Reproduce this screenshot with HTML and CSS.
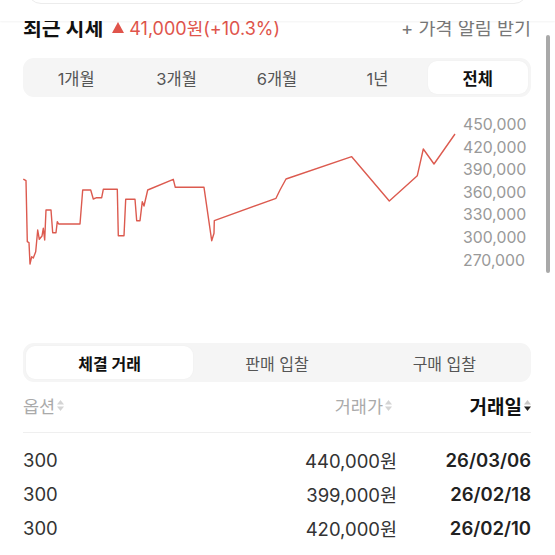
FILE: index.html
```html
<!DOCTYPE html>
<html lang="ko">
<head>
  <meta charset="UTF-8">
  <title>최근 시세</title>
  <link rel="stylesheet" href="styles.css">
</head>
<body>
  <div class="top-strip">
    <div class="prev-card"></div>
  </div>
  <div class="scroll-thumb"></div>

  <main class="page">
    <div class="price-head">
      <div class="price-title">
        <span class="title">최근 시세</span>
        <span class="change">
          <svg class="up" width="12" height="11" viewBox="0 0 12 11"><polygon points="6,0 12,11 0,11" fill="#e0544b"/></svg>
          41,000원(+10.3%)
        </span>
      </div>
      <div class="alert">+ 가격 알림 받기</div>
    </div>

    <div class="seg seg-5">
      <div class="seg-item">1개월</div>
      <div class="seg-item">3개월</div>
      <div class="seg-item">6개월</div>
      <div class="seg-item">1년</div>
      <div class="seg-item active">전체</div>
    </div>

    <div class="chart">
      <svg class="chart-line" width="440" height="170" viewBox="23 110 440 170">
        <polyline fill="none" stroke="#dc5a4f" stroke-width="1.4" stroke-linejoin="round"
          points="23.3,179 26,180.7 27.3,241.7 29,242.7 30,264 31.7,256.7 33.3,258 35.7,251.7 37.7,230 39.3,239.3 42,236 43.3,228.3 44.7,240 46,210 51,210 52.7,232.7 56,232.7 57.3,221.7 58.7,224 80,224 82.7,190 90.7,190 93.3,199 96.7,197.7 101.7,197.7 103.3,189.3 117.3,189.3 118.3,235.7 124,235.7 125.7,199.3 135,199.3 136.7,220.7 140,220.7 142.3,201.7 144,206 147.7,190 173.3,179.3 175.3,187.3 204,187.3 211.7,240.7 214,233.3 214.3,220.7 276,198.3 280,190 286,179 351.7,156.7 389.3,201 417.3,175.7 423.3,149 434,164 455,134"/>
      </svg>
      <div class="axis">
        <div>450,000</div>
        <div>420,000</div>
        <div>390,000</div>
        <div>360,000</div>
        <div>330,000</div>
        <div>300,000</div>
        <div>270,000</div>
      </div>
    </div>

    <div class="seg seg-3">
      <div class="seg-item active">체결 거래</div>
      <div class="seg-item">판매 입찰</div>
      <div class="seg-item">구매 입찰</div>
    </div>

    <div class="trades">
      <div class="trade-head">
        <div class="col-opt">옵션<svg class="sort" width="7" height="11" viewBox="0 0 7 11"><polygon points="0,4.5 3.5,0 7,4.5" fill="#d4d4d4"/><polygon points="0,6.5 7,6.5 3.5,11" fill="#d4d4d4"/></svg></div>
        <div class="col-price">거래가<svg class="sort" width="7" height="11" viewBox="0 0 7 11"><polygon points="0,4.5 3.5,0 7,4.5" fill="#d4d4d4"/><polygon points="0,6.5 7,6.5 3.5,11" fill="#d4d4d4"/></svg></div>
        <div class="col-date sorted">거래일<svg class="sort" width="7" height="11" viewBox="0 0 7 11"><polygon points="0,4.5 3.5,0 7,4.5" fill="#c8c8c8"/><polygon points="0,6.5 7,6.5 3.5,11" fill="#222"/></svg></div>
      </div>

      <div class="trade-rows">
        <div class="trade-row">
          <div class="col-opt">300</div>
          <div class="col-price">440,000원</div>
          <div class="col-date">26/03/06</div>
        </div>
        <div class="trade-row">
          <div class="col-opt">300</div>
          <div class="col-price">399,000원</div>
          <div class="col-date">26/02/18</div>
        </div>
        <div class="trade-row">
          <div class="col-opt">300</div>
          <div class="col-price">420,000원</div>
          <div class="col-date">26/02/10</div>
        </div>
      </div>
    </div>
  </main>
</body>
</html>
```

FILE: styles.css
```css
body {
  margin: 0;
  background: #fff;
  color: #222;
  font-family: Inter, "Noto Sans CJK KR", sans-serif;
  overflow: hidden;
}

.top-strip {
  position: absolute;
  top: 0;
  left: 0;
  right: 0;
  height: 21px;
  background: #fff;
  box-shadow: 0 1px 2px rgba(0, 0, 0, 0.05);
  overflow: hidden;
  z-index: 2;
}

.prev-card {
  position: absolute;
  left: 27px;
  right: 27px;
  top: -30px;
  height: 32px;
  border: 1px solid #ececec;
  border-radius: 14px;
}

.scroll-thumb {
  position: absolute;
  left: 546px;
  top: 35px;
  width: 4px;
  height: 238px;
  border-radius: 2px;
  background: #a9a9a9;
}

.page {
  padding: 0 24px 0 23px;
}

/* header */
.price-head {
  display: flex;
  justify-content: space-between;
  align-items: center;
  height: 36px;
  margin-top: 9px;
}

.price-title {
  display: flex;
  align-items: center;
  gap: 9px;
}

.title {
  font-size: 20.5px;
  font-weight: 700;
  color: #111;
}

.change {
  display: flex;
  align-items: center;
  gap: 5px;
  font-size: 18px;
  color: #e0544b;
}

.alert {
  font-size: 18.5px;
  color: #777;
}

/* segmented controls */
.seg {
  display: grid;
  height: 39px;
  padding: 3px;
  box-sizing: border-box;
  background: #f5f5f5;
  border-radius: 11px;
}

.seg-5 {
  grid-template-columns: repeat(5, 1fr);
  margin-top: 13px;
}

.seg-3 {
  grid-template-columns: repeat(3, 1fr);
  margin-top: 63px;
}

.seg-item {
  display: flex;
  align-items: center;
  justify-content: center;
  font-size: 16.5px;
  color: #555;
  border-radius: 9px;
}

.seg-3 .seg-item {
  font-size: 16px;
}

.seg-item.active {
  background: #fff;
  color: #111;
  font-weight: 700;
  box-shadow: 0 0 2px rgba(0, 0, 0, 0.04);
}

/* chart */
.chart {
  display: flex;
  height: 170px;
  margin-top: 13px;
}

.chart-line {
  display: block;
  flex: none;
}

.axis {
  padding-top: 4px;
  font-size: 15.8px;
  line-height: 22.6px;
  color: #999;
}

/* trades table */
.trade-head,
.trade-row {
  display: grid;
  grid-template-columns: 1fr 140px 134px;
  align-items: center;
}

.trade-head {
  height: 32px;
  margin-top: 7px;
  padding-bottom: 11px;
  border-bottom: 1.5px solid #efefef;
  font-size: 17.5px;
  color: #aaa;
}

.trade-head .col-price,
.trade-head .col-date {
  display: flex;
  justify-content: flex-end;
  align-items: center;
}

.trade-head .col-price {
  padding-right: 5px;
}

.trade-head .col-opt {
  display: flex;
  align-items: center;
}

.sort {
  margin-left: 2px;
}

.trade-head .sorted {
  color: #111;
  font-weight: 700;
  font-size: 19px;
}

.trade-rows {
  padding-top: 10px;
}

.trade-row {
  height: 34px;
  font-size: 18.5px;
  color: #333;
}

.trade-row .col-price {
  text-align: right;
}

.trade-row .col-date {
  text-align: right;
  font-weight: 600;
  color: #222;
}
```
